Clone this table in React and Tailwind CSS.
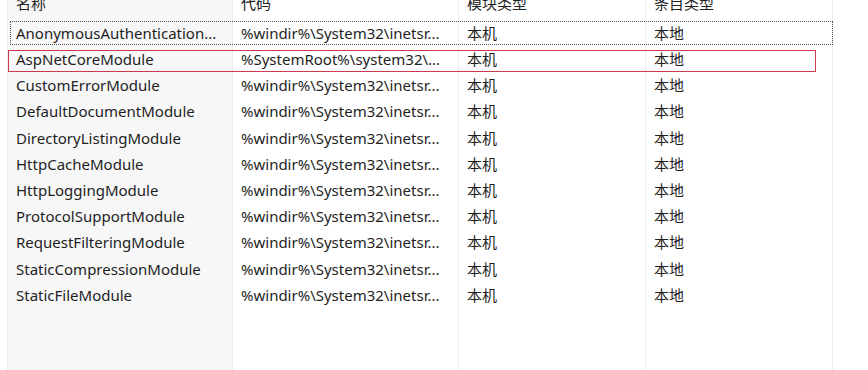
const rows = [
  "AnonymousAuthentication...",
  "AspNetCoreModule",
  "CustomErrorModule",
  "DefaultDocumentModule",
  "DirectoryListingModule",
  "HttpCacheModule",
  "HttpLoggingModule",
  "ProtocolSupportModule",
  "RequestFilteringModule",
  "StaticCompressionModule",
  "StaticFileModule",
];

const columns = [
  { title: "名称", width: "w-[226px]", bg: "bg-[#f7f7f8]", cell: (name) => name },
  {
    title: "代码",
    width: "w-[226px]",
    bg: "bg-white",
    cell: (name) =>
      name === "AspNetCoreModule" ? "%SystemRoot%\\system32\\..." : "%windir%\\System32\\inetsr...",
  },
  { title: "模块类型", width: "w-[187px]", bg: "bg-white", cell: () => "本机" },
  { title: "条目类型", width: "w-[187px]", bg: "bg-white", cell: () => "本地" },
];

const font = { fontFamily: '"Noto Sans", "Noto Sans CJK SC", sans-serif' };

export default function App() {
  return (
    <div className="w-[868px] h-[370px] bg-white overflow-hidden" style={font}>
      <div className="relative flex ml-[7px] w-[826px] h-full">
        {columns.map((col) => (
          <div
            key={col.title}
            className={`${col.width} ${col.bg} h-full border-r border-[#ececec] first:border-l`}
          >
            <div className="h-[20px] overflow-hidden">
              <div className="mt-[-7px] pl-[8px] text-[15px] leading-[20px] text-[#222]">
                {col.title}
              </div>
            </div>
            {rows.map((name) => (
              <div
                key={name}
                className="h-[26.2px] pl-[8px] flex items-center text-[15px] text-[#1e1e1e] whitespace-nowrap overflow-hidden"
              >
                {col.cell(name)}
              </div>
            ))}
          </div>
        ))}
        {/* focus rect on the first row */}
        <div className="absolute left-[3px] top-[21px] w-[823px] h-[24px] border border-dotted border-[#555] pointer-events-none" />
        {/* red highlight on AspNetCoreModule */}
        <div className="absolute left-[1px] top-[50px] w-[808px] h-[22px] border border-[#cc3a50] pointer-events-none" />
      </div>
    </div>
  );
}
